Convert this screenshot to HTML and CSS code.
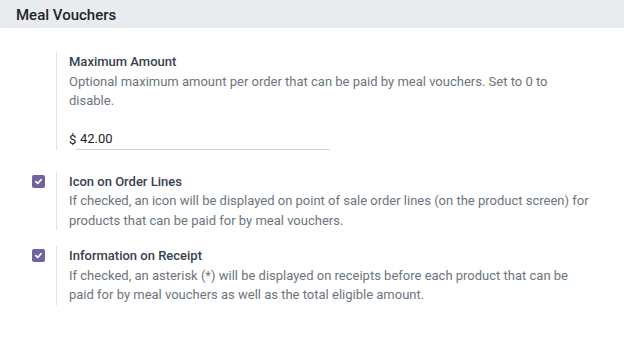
FILE: index.html
```html
<!DOCTYPE html>
<html>
<head>
<meta charset="utf-8">
<link rel="stylesheet" href="styles.css">
</head>
<body>
<div class="section-head">Meal Vouchers</div>
<div class="settings">
  <div class="setting setting-amount">
    <div class="box-col"></div>
    <div class="content">
      <div class="label">Maximum Amount</div>
      <div class="desc">Optional maximum amount per order that can be paid by meal vouchers. Set to 0 to disable.</div>
      <div class="money"><span class="cur">$</span><span class="field">42.00</span></div>
    </div>
  </div>
  <div class="setting">
    <div class="box-col"><span class="check"><svg width="9" height="9" viewBox="0 0 9 9"><path d="M1.8 4.6 L3.7 6.4 L7.2 2.6" fill="none" stroke="#fff" stroke-width="1.6" stroke-linecap="round" stroke-linejoin="round"/></svg></span></div>
    <div class="content">
      <div class="label">Icon on Order Lines</div>
      <div class="desc">If checked, an icon will be displayed on point of sale order lines (on the product screen) for products that can be paid for by meal vouchers.</div>
    </div>
  </div>
  <div class="setting">
    <div class="box-col"><span class="check"><svg width="9" height="9" viewBox="0 0 9 9"><path d="M1.8 4.6 L3.7 6.4 L7.2 2.6" fill="none" stroke="#fff" stroke-width="1.6" stroke-linecap="round" stroke-linejoin="round"/></svg></span></div>
    <div class="content">
      <div class="label">Information on Receipt</div>
      <div class="desc">If checked, an asterisk (*) will be displayed on receipts before each product that can be paid for by meal vouchers as well as the total eligible amount.</div>
    </div>
  </div>
</div>
</body>
</html>
```
FILE: styles.css
```css
html, body {
  margin: 0;
  padding: 0;
  background: #fff;
  font-family: Roboto, "Noto Sans", sans-serif;
  font-size: 13px;
  line-height: 19.5px;
}
.section-head {
  height: 28px;
  background: #e9ecef;
  padding-left: 16px;
  font-size: 15px;
  font-weight: 500;
  color: #212529;
  line-height: 30px;
}
.settings {
  padding-top: 24px;
  display: flex;
  flex-direction: column;
}
.setting {
  display: flex;
  margin-bottom: 16px;
}
.setting-amount {
  margin-bottom: 22px;
}
.box-col {
  width: 56px;
  flex: none;
  display: flex;
  justify-content: flex-end;
  padding-right: 11px;
  box-sizing: border-box;
  padding-top: 3px;
}
.content {
  border-left: 1px solid #dee2e6;
  padding-left: 12px;
  width: 522px;
}
.label {
  color: #374151;
  font-weight: 500;
}
.desc {
  color: #6c757d;
}
.check {
  width: 13px;
  height: 13px;
  border-radius: 2px;
  background: #71639e;
  display: flex;
  align-items: center;
  justify-content: center;
}
.money {
  display: flex;
  align-items: flex-end;
  margin-top: 17px;
  color: #212529;
}
.cur {
  width: 7px;
  line-height: 21px;
}
.field {
  width: 248px;
  padding-left: 6px;
  border-bottom: 1px solid #ced4da;
  line-height: 21px;
  text-indent: -2px;
}
```
